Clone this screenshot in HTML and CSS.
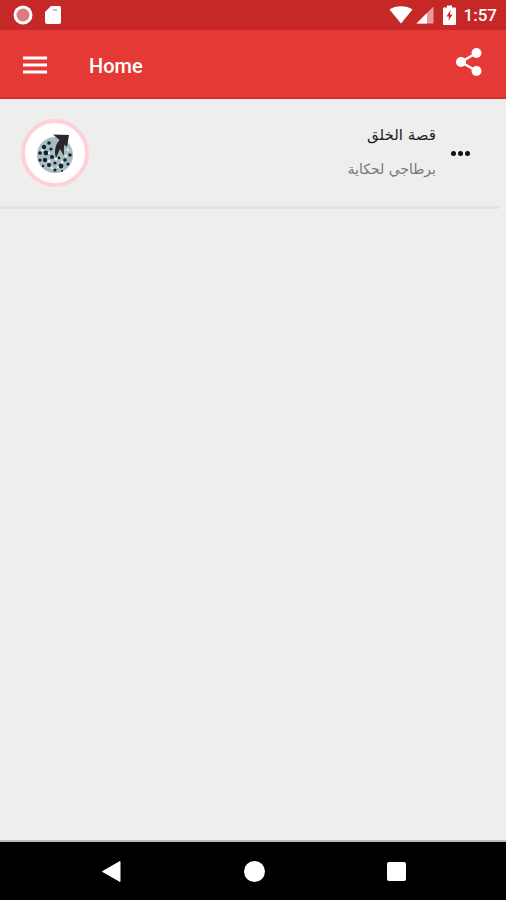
FILE: index.html
```html
<!DOCTYPE html>
<html lang="en">
<head>
    <meta charset="UTF-8">
    <meta name="viewport" content="width=device-width, initial-scale=1.0">
    <title>Home</title>
    <link rel="stylesheet" href="styles.css">
</head>
<body>
    <div class="status-bar">
        <div class="status-left">
            <svg width="20" height="20" viewBox="0 0 20 20"><circle cx="10" cy="10" r="9.500" fill="#fff"/><circle cx="10" cy="10" r="6.500" fill="#dc7a7c"/></svg>
            <svg width="18" height="20" viewBox="0 0 18 20"><path d="M7 1H15a2 2 0 0 1 2 2V17a2 2 0 0 1-2 2H3a2 2 0 0 1-2-2V7z" fill="#fff"/><rect x="9" y="4" width="4" height="2" fill="#e6b0b0"/></svg>
        </div>
        <div class="status-right">
            <svg class="wifi" width="24" height="18" viewBox="0 0 24 18"><path d="M0.500 3.500C7 -0.800 17 -0.800 23.500 3.500L12 17.500z" fill="#fff"/></svg>
            <svg class="signal" width="18" height="18" viewBox="0 0 18 18"><path d="M0.500 17.500L17.500 0.500V17.500z" fill="#e99a9a"/><path d="M0.500 17.500L11 7V17.500z" fill="#fff"/></svg>
            <svg class="battery" width="13" height="20" viewBox="0 0 13 20"><path d="M4 0.500H9V2.500H12a1 1 0 0 1 1 1V19a1 1 0 0 1-1 1H1a1 1 0 0 1-1-1V3.500a1 1 0 0 1 1-1H4z" fill="#fff"/><path d="M7.500 5L3.500 11.500H6L5.500 16L9.500 9.500H7z" fill="#c62828"/></svg>
            <span class="clock">1:57</span>
        </div>
    </div>

    <div class="app-bar">
        <button class="menu-btn">
            <svg width="24" height="18" viewBox="0 0 24 18"><path d="M0 0.500H24V3.500H0zM0 7.500H24V10.500H0zM0 14.500H24V17.500H0z" fill="#fff"/></svg>
        </button>
        <span class="app-title">Home</span>
        <button class="share-btn">
            <svg width="28" height="30" viewBox="0 0 28 30"><path d="M21.500 6L6 15L21.500 24" fill="none" stroke="#fff" stroke-width="2.500"/><circle cx="21.500" cy="6" r="5" fill="#fff"/><circle cx="6" cy="15" r="5" fill="#fff"/><circle cx="21.500" cy="24" r="5" fill="#fff"/></svg>
        </button>
    </div>

    <div class="content">
        <div class="item">
            <div class="avatar">
                <svg width="40" height="40" viewBox="0 0 40 40">
                    <circle cx="20" cy="22" r="18" fill="#a9bcc4"/>
                    <g fill="#14242c">
                        <circle cx="9" cy="14" r="2.200"/><circle cx="14" cy="10" r="1.800"/><circle cx="5" cy="20" r="1.800"/>
                        <circle cx="11" cy="20" r="2.400"/><circle cx="5" cy="27" r="1.600"/><circle cx="10" cy="27" r="2.200"/>
                        <circle cx="16" cy="16" r="1.600"/><circle cx="17" cy="24" r="2"/><circle cx="14" cy="32" r="2"/>
                        <circle cx="20" cy="30" r="1.600"/><circle cx="20" cy="37" r="1.600"/><circle cx="26" cy="33" r="2.400"/>
                        <circle cx="30" cy="27" r="1.800"/><circle cx="35" cy="22" r="1.800"/><circle cx="33" cy="31" r="1.600"/>
                        <circle cx="24" cy="25" r="1.400"/><circle cx="8" cy="33" r="1.200"/><circle cx="27" cy="38" r="1"/>
                    </g>
                    <g fill="#e6eff2">
                        <circle cx="7" cy="17" r="1.200"/><circle cx="14" cy="28" r="1.500"/><circle cx="27" cy="29" r="1.500"/>
                        <circle cx="31" cy="23" r="1.200"/><circle cx="21" cy="26" r="1.600"/><circle cx="33" cy="17" r="1.300"/>
                        <circle cx="17" cy="35" r="1.300"/><circle cx="14" cy="20" r="1.200"/><circle cx="23" cy="34" r="1.100"/>
                    </g>
                    <path d="M18 1.500L34 2L32 14L29.500 11.500C28.500 15 29 19 29 23L25 16L21 25C19 19 20 12 24.500 7z" fill="#26282a"/>
                </svg>
            </div>
            <div class="item-text">
                <div class="item-title">قصة الخلق</div>
                <div class="item-sub">برطاجي لحكاية</div>
            </div>
            <div class="dots">
                <span></span><span></span><span></span>
            </div>
        </div>
        <div class="divider"></div>
    </div>

    <div class="nav-bar">
        <svg width="19" height="21" viewBox="0 0 19 21"><path d="M18 0.500V20.500L0.500 10.500z" fill="#fff" stroke="#fff" stroke-linejoin="round"/></svg>
        <div class="nav-home"></div>
        <div class="nav-recent"></div>
    </div>
</body>
</html>
```

FILE: styles.css
```css
body {
    margin: 0;
    height: 900px;
    display: flex;
    flex-direction: column;
    font-family: "Roboto", "Liberation Sans", sans-serif;
    background: #eeeeee;
    overflow: hidden;
}
.status-bar {
    height: 30px;
    flex-shrink: 0;
    background: #c62828;
    display: flex;
    justify-content: space-between;
    align-items: center;
    padding: 0 9px 0 13px;
}
.status-left {
    display: flex;
    align-items: center;
    gap: 11px;
}
.status-right {
    display: flex;
    align-items: center;
}
.wifi {
    margin-right: 3px;
}
.signal {
    margin-right: 9px;
}
.battery {
    margin-right: 8px;
}
.clock {
    color: #fff;
    font-size: 17px;
    font-weight: 500;
}
.app-bar {
    height: 65px;
    flex-shrink: 0;
    background: #e53935;
    border-bottom: 2px solid #d32f2f;
    display: flex;
    align-items: center;
    padding: 2px 23px 0 23px;
}
button {
    background: none;
    border: none;
    padding: 0;
    display: flex;
}
.app-title {
    color: #fff;
    font-size: 20px;
    font-weight: 500;
    margin-left: 42px;
    padding-top: 2px;
}
.share-btn {
    margin-left: auto;
    margin-bottom: 5px;
}
.content {
    flex: 1;
    border-bottom: 2px solid #bdbdbd;
}
.item {
    height: 107px;
    display: flex;
    align-items: center;
    padding: 0 36px 0 21px;
}
.avatar {
    width: 60px;
    height: 60px;
    border: 4px solid #ffd0d5;
    border-radius: 50%;
    background: #fff;
    display: flex;
    align-items: center;
    justify-content: center;
}
.item-text {
    flex: 1;
    text-align: right;
    direction: rtl;
    font-family: "DejaVu Sans", sans-serif;
    margin-right: 1px;
}
.item-title {
    font-size: 15px;
    color: #222;
    margin-bottom: 17px;
    margin-top: -3px;
}
.item-sub {
    font-size: 14px;
    color: #777;
}
.dots {
    display: flex;
    gap: 2px;
    margin-left: 14px;
    margin-top: 1px;
}
.dots span {
    width: 5px;
    height: 5px;
    border-radius: 50%;
    background: #111;
}
.divider {
    height: 3px;
    width: 499px;
    background: #e2e2e2;
}
.nav-bar {
    height: 58px;
    flex-shrink: 0;
    background: #000;
    display: flex;
    align-items: center;
    padding: 0 100px 0 102px;
    justify-content: space-between;
}
.nav-home {
    width: 21px;
    height: 21px;
    border-radius: 50%;
    background: #fff;
}
.nav-recent {
    width: 19px;
    height: 19px;
    border-radius: 2px;
    background: #fff;
}
```
